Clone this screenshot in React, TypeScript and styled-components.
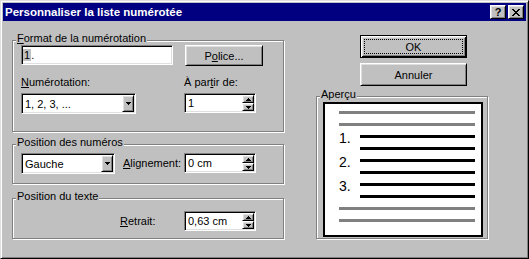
import styled, { createGlobalStyle, css } from 'styled-components';

const GlobalStyle = createGlobalStyle`
  * { box-sizing: border-box; }
  html, body { margin: 0; padding: 0; background: #c0c0c0; }
  body {
    font-family: "Liberation Sans", Arial, sans-serif;
    font-size: 11px;
    color: #000;
  }
`;

const raised = css`
  background: #c0c0c0;
  border: 1px solid;
  border-color: #fff #000 #000 #fff;
  box-shadow: inset 1px 1px #dfdfdf, inset -1px -1px #808080;
`;

const sunken = css`
  background: #fff;
  border: 1px solid;
  border-color: #808080 #fff #fff #808080;
  box-shadow: inset 1px 1px #000, inset -1px -1px #dfdfdf;
`;

const Window = styled.div`
  width: 529px;
  height: 259px;
  background: #c0c0c0;
  border: 1px solid;
  border-color: #dfdfdf #000 #000 #dfdfdf;
  box-shadow: inset 1px 1px #fff, inset -1px -1px #808080;
  padding: 2px;
  display: flex;
  flex-direction: column;
`;

const TitleBar = styled.div`
  height: 18px;
  flex-shrink: 0;
  background: #000080;
  display: flex;
  align-items: center;
  padding: 0 2px;
`;

const Title = styled.div`
  flex: 1;
  color: #fff;
  font-weight: bold;
  font-size: 11.5px;
  white-space: nowrap;
`;

const TitleButton = styled.div<{ $gap?: number }>`
  ${raised}
  width: 16px;
  height: 14px;
  margin-right: ${({ $gap }) => $gap ?? 0}px;
  display: flex;
  align-items: center;
  justify-content: center;
  font-weight: bold;
  font-size: 11px;
  line-height: 1;
`;

const Body = styled.div`
  display: flex;
  padding-left: 9px;
`;

const LeftColumn = styled.div`
  width: 272px;
  padding-top: 19px;
  display: flex;
  flex-direction: column;
`;

const RightColumn = styled.div`
  width: 172px;
  margin-left: 32px;
  padding-top: 14px;
  display: flex;
  flex-direction: column;
`;

const Group = styled.div<{ $h: number; $mt?: number; $pad: string }>`
  position: relative;
  height: ${({ $h }) => $h}px;
  margin-top: ${({ $mt }) => $mt ?? 0}px;
  padding: ${({ $pad }) => $pad};
  border: 1px solid #808080;
  box-shadow: inset 1px 1px #fff, 1px 1px #fff;
`;

const Caption = styled.span`
  position: absolute;
  top: -9px;
  left: 3px;
  padding: 0 1px;
  background: #c0c0c0;
  line-height: 13px;
  white-space: nowrap;
`;

const U = styled.span`
  text-decoration: underline;
`;

const Row = styled.div<{ $mt?: number }>`
  display: flex;
  align-items: flex-start;
  margin-top: ${({ $mt }) => $mt ?? 0}px;
`;

const Label = styled.div<{ $w?: number; $ml?: number }>`
  ${({ $w }) => ($w ? `width: ${$w}px;` : '')}
  margin-left: ${({ $ml }) => $ml ?? 0}px;
  line-height: 13px;
  white-space: nowrap;
  align-self: center;
`;

const TextField = styled.div<{ $w: number }>`
  ${sunken}
  width: ${({ $w }) => $w}px;
  height: 20px;
  padding: 1px;
  display: flex;
  align-items: center;
`;

const Selected = styled.span`
  background: #c0c0c0;
  padding: 0 1px;
`;

const Combo = styled.div<{ $w: number }>`
  ${sunken}
  width: ${({ $w }) => $w}px;
  height: 21px;
  padding: 1px;
  display: flex;
`;

const FieldText = styled.div`
  flex: 1;
  padding-left: 2px;
  display: flex;
  align-items: center;
  white-space: nowrap;
`;

const ArrowButton = styled.div`
  ${raised}
  width: 12px;
  display: flex;
  align-items: center;
  justify-content: center;
`;

const Spinner = styled.div<{ $ml?: number }>`
  ${sunken}
  width: 72px;
  height: 20px;
  padding: 1px;
  margin-left: ${({ $ml }) => ($ml === undefined ? 'auto' : `${$ml}px`)};
  display: flex;
`;

const SpinButtons = styled.div`
  width: 12px;
  display: flex;
  flex-direction: column;
`;

const SpinButton = styled.div`
  ${raised}
  flex: 1;
  display: flex;
  align-items: center;
  justify-content: center;
`;

const PushButton = styled.button<{ $w: number; $h: number; $ml?: number; $mt?: number; $default?: boolean }>`
  ${raised}
  width: ${({ $w }) => $w}px;
  height: ${({ $h }) => $h}px;
  margin: ${({ $mt }) => $mt ?? 0}px 0 0 ${({ $ml }) => $ml ?? 0}px;
  padding: 3px;
  display: flex;
  align-items: stretch;
  font-family: inherit;
  font-size: 11px;
  color: #000;
  ${({ $default }) =>
    $default &&
    css`
      border-color: #000;
      box-shadow: inset 1px 1px #fff, inset -1px -1px #000, inset 2px 2px #dfdfdf, inset -2px -2px #808080;
    `}
`;

const ButtonFace = styled.span<{ $focus?: boolean }>`
  flex: 1;
  display: flex;
  align-items: center;
  justify-content: center;
  border: 1px dotted ${({ $focus }) => ($focus ? '#000' : 'transparent')};
`;

const Preview = styled.div`
  width: 160px;
  height: 135px;
  background: #fff;
  border: 2px solid #000;
  padding: 7px 0 0 14px;
`;

const Bar = styled.div<{ $w: number; $dark?: boolean }>`
  width: ${({ $w }) => $w}px;
  height: 3px;
  margin-bottom: 9px;
  background: ${({ $dark }) => ($dark ? '#000' : '#808080')};
`;

const Item = styled.div`
  display: flex;
`;

const Num = styled.div`
  width: 21px;
  font-size: 14px;
  line-height: 12px;
  margin-top: -3px;
`;

const Arrow = ({ up }: { up?: boolean }) => (
  <svg width="5" height="3" viewBox="0 0 5 3" shapeRendering="crispEdges">
    <path
      d={up ? 'M2 0h1v1H2zM1 1h3v1H1zM0 2h5v1H0z' : 'M0 0h5v1H0zM1 1h3v1H1zM2 2h1v1H2z'}
      fill="#000"
    />
  </svg>
);

const CloseGlyph = () => (
  <svg width="8" height="7" viewBox="0 0 8 7" shapeRendering="crispEdges">
    <path
      d="M0 0h2v1H0zM6 0h2v1H6zM1 1h2v1H1zM5 1h2v1H5zM2 2h4v1H2zM3 3h2v1H3zM2 4h4v1H2zM1 5h2v1H1zM5 5h2v1H5zM0 6h2v1H0zM6 6h2v1H6z"
      fill="#000"
    />
  </svg>
);

const SpinBox = ({ value, ml }: { value: string; ml?: number }) => (
  <Spinner $ml={ml}>
    <FieldText>{value}</FieldText>
    <SpinButtons>
      <SpinButton><Arrow up /></SpinButton>
      <SpinButton><Arrow /></SpinButton>
    </SpinButtons>
  </Spinner>
);

const ComboBox = ({ value, width }: { value: string; width: number }) => (
  <Combo $w={width}>
    <FieldText>{value}</FieldText>
    <ArrowButton><Arrow /></ArrowButton>
  </Combo>
);

const App = () => {
  return (
    <>
      <GlobalStyle />
      <Window>
        <TitleBar>
          <Title>Personnaliser la liste numérotée</Title>
          <TitleButton $gap={2}>?</TitleButton>
          <TitleButton><CloseGlyph /></TitleButton>
        </TitleBar>
        <Body>
          <LeftColumn>
            <Group $h={92} $pad="4px 20px 0 8px">
              <Caption><U>F</U>ormat de la numérotation</Caption>
              <Row>
                <TextField $w={152}>
                  <Selected>1</Selected>.
                </TextField>
                <PushButton $w={78} $h={21} $ml={12}>
                  <ButtonFace>P<U>o</U>lice...</ButtonFace>
                </PushButton>
              </Row>
              <Row $mt={10}>
                <Label $w={163}><U>N</U>umérotation:</Label>
                <Label>À par<U>t</U>ir de:</Label>
              </Row>
              <Row $mt={4}>
                <ComboBox value="1, 2, 3, ..." width={115} />
                <SpinBox value="1" ml={48} />
              </Row>
            </Group>

            <Group $h={40} $mt={12} $pad="8px 27px 0 8px">
              <Caption>Position des numéros</Caption>
              <Row>
                <ComboBox value="Gauche" width={94} />
                <Label $ml={8}><U>A</U>lignement:</Label>
                <SpinBox value="0 cm" />
              </Row>
            </Group>

            <Group $h={41} $mt={14} $pad="12px 27px 0 8px">
              <Caption>Position du texte</Caption>
              <Row>
                <Label $ml={99}><U>R</U>etrait:</Label>
                <SpinBox value="0,63 cm" />
              </Row>
            </Group>
          </LeftColumn>

          <RightColumn>
            <PushButton $w={107} $h={23} $ml={44} $default>
              <ButtonFace $focus>OK</ButtonFace>
            </PushButton>
            <PushButton $w={107} $h={23} $ml={44} $mt={5}>
              <ButtonFace>Annuler</ButtonFace>
            </PushButton>
            <Group $h={143} $mt={10} $pad="5px 0 0 6px">
              <Caption>Aperçu</Caption>
              <Preview>
                <Bar $w={136} />
                <Bar $w={136} />
                {['1.', '2.', '3.'].map((n) => (
                  <Item key={n}>
                    <Num>{n}</Num>
                    <div>
                      <Bar $w={115} $dark />
                      <Bar $w={115} $dark />
                    </div>
                  </Item>
                ))}
                <Bar $w={136} />
                <Bar $w={136} />
              </Preview>
            </Group>
          </RightColumn>
        </Body>
      </Window>
    </>
  );
};

export default App;
